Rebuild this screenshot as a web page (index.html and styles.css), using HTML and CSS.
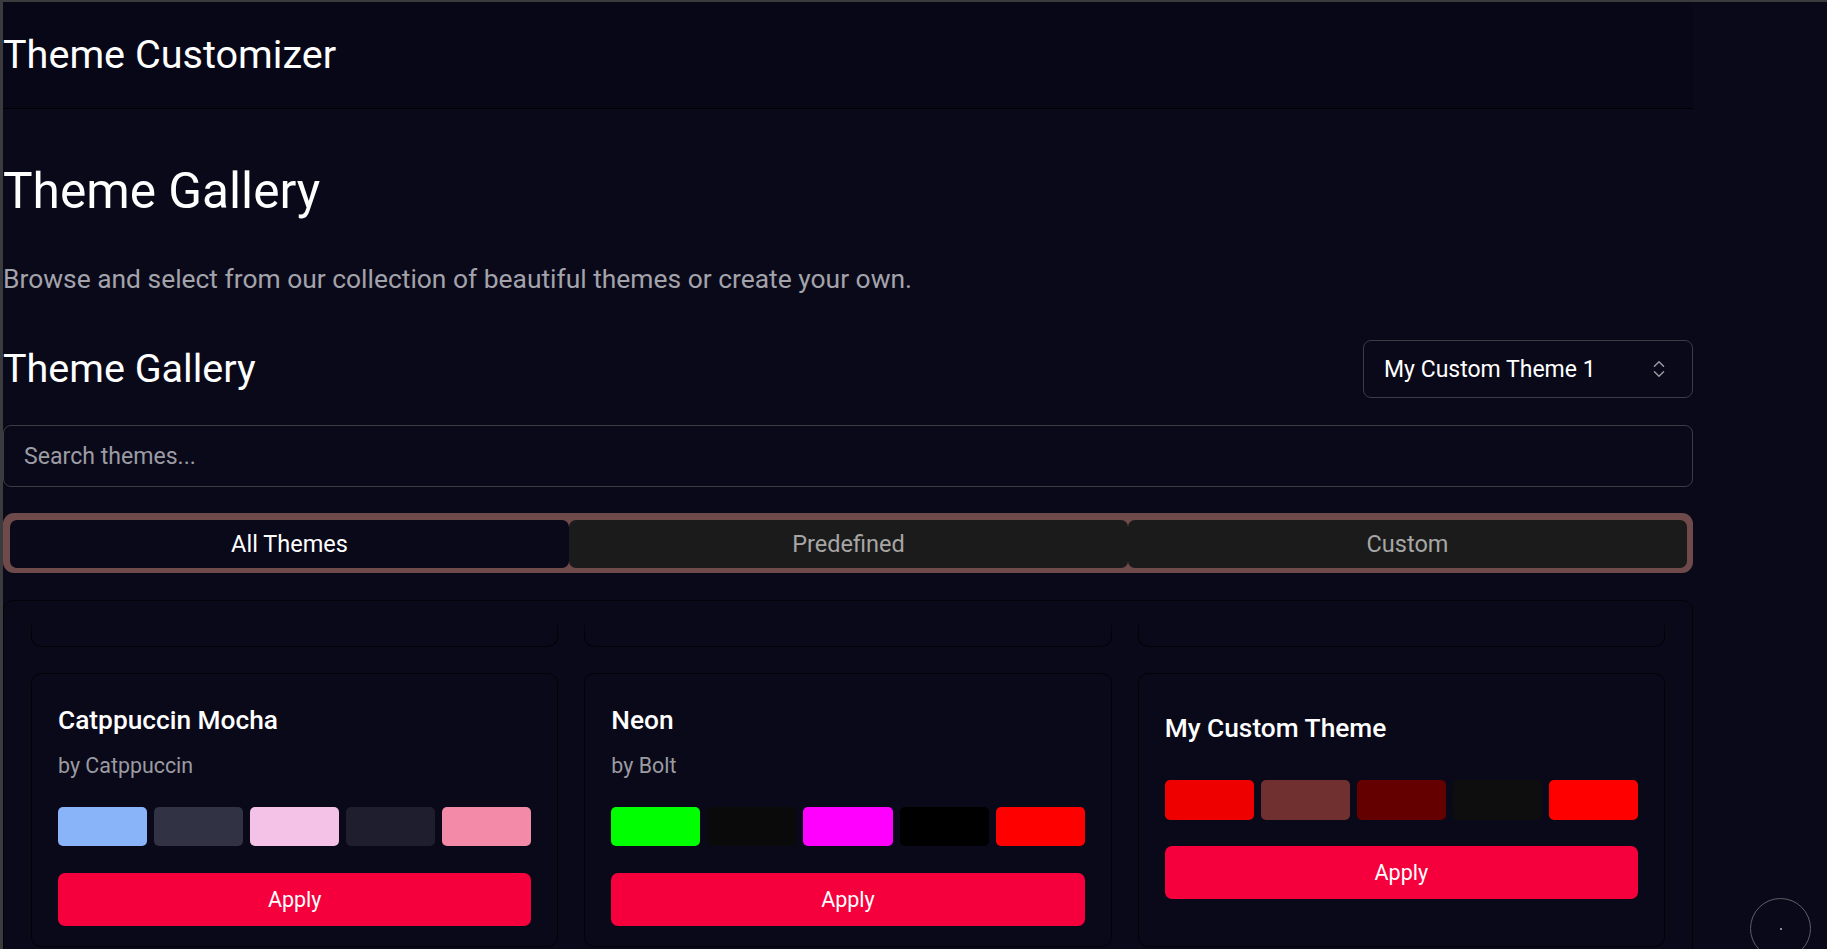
FILE: index.html
```html
<!DOCTYPE html>
<html lang="en">
<head>
<meta charset="utf-8">
<title>Theme Customizer</title>
<link rel="stylesheet" href="styles.css">
</head>
<body>
<div class="page">
  <header class="app-header">
    <h1 class="app-title">Theme Customizer</h1>
  </header>

  <main class="main">
    <h1 class="page-title">Theme Gallery</h1>
    <p class="page-sub">Browse and select from our collection of beautiful themes or create your own.</p>

    <div class="toolbar">
      <h2 class="section-title">Theme Gallery</h2>
      <button class="select">
        <span>My Custom Theme 1</span>
        <svg class="select-icon" viewBox="0 0 24 24" fill="none" stroke="currentColor" stroke-width="1.6" stroke-linecap="round" stroke-linejoin="round"><path d="m7 15 5 5 5-5"/><path d="m7 9 5-5 5 5"/></svg>
      </button>
    </div>

    <div class="search">Search themes...</div>

    <div class="tabs">
      <div class="tab active">All Themes</div>
      <div class="tab">Predefined</div>
      <div class="tab">Custom</div>
    </div>

    <section class="gallery">
      <div class="grid">
        <div class="card peek"></div>
        <div class="card peek"></div>
        <div class="card peek"></div>

        <div class="card">
          <div class="card-title">Catppuccin Mocha</div>
          <div class="card-author">by Catppuccin</div>
          <div class="swatches">
            <span class="swatch" style="background:#89b4fa"></span>
            <span class="swatch" style="background:#313244"></span>
            <span class="swatch" style="background:#f5c2e7"></span>
            <span class="swatch" style="background:#1e1e2e"></span>
            <span class="swatch" style="background:#f38ba8"></span>
          </div>
          <button class="apply">Apply</button>
        </div>

        <div class="card">
          <div class="card-title">Neon</div>
          <div class="card-author">by Bolt</div>
          <div class="swatches">
            <span class="swatch" style="background:#00ff00"></span>
            <span class="swatch" style="background:#0a0a0a"></span>
            <span class="swatch" style="background:#ff00ff"></span>
            <span class="swatch" style="background:#000000"></span>
            <span class="swatch" style="background:#ff0000"></span>
          </div>
          <button class="apply">Apply</button>
        </div>

        <div class="card custom">
          <div class="card-head">
            <div class="card-title">My Custom Theme</div>
          </div>
          <div class="swatches tall">
            <span class="swatch" style="background:#ee0000"></span>
            <span class="swatch" style="background:#703030"></span>
            <span class="swatch" style="background:#650000"></span>
            <span class="swatch" style="background:#0e0e0e"></span>
            <span class="swatch" style="background:#ff0000"></span>
          </div>
          <button class="apply">Apply</button>
        </div>
      </div>
    </section>
  </main>
</div>
<div class="fab"><span class="fab-dot"></span></div>
</body>
</html>
```

FILE: styles.css
```css
* { box-sizing: border-box; }

html, body {
  margin: 0;
  padding: 0;
}

body {
  background: #0a0919;
  color: #ffffff;
  font-family: Roboto, "Noto Sans", "Liberation Sans", sans-serif;
  border-top: 2px solid #3b3b3e;
  border-left: 3px solid #3b3b3e;
  height: 100vh;
  overflow: hidden;
}

.page {
  width: 1690px;
}

.app-header {
  height: 107px;
  background: #070718;
  border-bottom: 1px solid #000000;
  display: flex;
  align-items: center;
}

.app-title {
  margin: 0;
  font-size: 39.6px;
  line-height: 48px;
  font-weight: 400;
  color: #ffffff;
}

.main {
  display: flex;
  flex-direction: column;
}

.page-title {
  margin: 52px 0 0;
  font-size: 49.6px;
  line-height: 60px;
  font-weight: 400;
}

.page-sub {
  margin: 42px 0 0;
  font-size: 26.4px;
  line-height: 32px;
  color: #a3a3ab;
}

.toolbar {
  margin-top: 45px;
  display: flex;
  align-items: center;
  justify-content: space-between;
  height: 58px;
}

.section-title {
  margin: 0;
  font-size: 39.5px;
  line-height: 48px;
  font-weight: 400;
}

.select {
  width: 330px;
  height: 58px;
  background: transparent;
  border: 1px solid #3c3c44;
  border-radius: 8px;
  color: #ffffff;
  font-family: inherit;
  font-size: 23px;
  padding: 0 20px 0 20px;
  display: flex;
  align-items: center;
  justify-content: space-between;
}

.select-icon {
  width: 22px;
  height: 22px;
  color: #9a9aa2;
  margin-right: 2px;
}

.search {
  margin-top: 27px;
  height: 62px;
  border: 1px solid #3c3c44;
  border-radius: 8px;
  padding: 0 20px;
  display: flex;
  align-items: center;
  font-size: 23.1px;
  color: #9c9ca4;
}

.tabs {
  margin-top: 26px;
  height: 60px;
  background: #6f4a4a;
  border-radius: 11px;
  padding: 7px 6px 5px 7px;
  display: grid;
  grid-template-columns: 1fr 1fr 1fr;
}

.tab {
  background: #1b1b1b;
  border-radius: 7px;
  display: flex;
  align-items: center;
  justify-content: center;
  font-size: 23.5px;
  font-weight: 400;
  color: #a6a6a6;
}

.tab.active {
  background: #0a0919;
  color: #ffffff;
}

.gallery {
  margin-top: 27px;
  border: 1px solid #020207;
  border-radius: 10px;
  padding: 24px 27px 40px;
}

.grid {
  display: grid;
  grid-template-columns: repeat(3, 1fr);
  gap: 26px;
}

.card {
  border: 1px solid #020207;
  border-radius: 10px;
  padding: 30px 26px 20px;
  display: flex;
  flex-direction: column;
}

.card.peek {
  height: 22px;
  padding: 0;
  border-top: none;
  border-radius: 0 0 10px 10px;
}

.card-title {
  font-size: 26.3px;
  line-height: 32px;
  font-weight: 500;
  color: #ffffff;
}

.card-head {
  min-height: 48px;
  display: flex;
  align-items: center;
}

.card-author {
  margin-top: 16px;
  font-size: 21.4px;
  line-height: 28px;
  color: #9b9ba2;
}

.swatches {
  margin-top: 27px;
  display: grid;
  grid-template-columns: repeat(5, 1fr);
  gap: 7px;
  height: 39px;
}

.swatches.tall {
  margin-top: 28px;
  height: 40px;
}

.swatch {
  border-radius: 5px;
}

.apply {
  margin-top: 27px;
  height: 53px;
  border: none;
  border-radius: 7px;
  background: #f5003d;
  color: #ffffff;
  font-family: inherit;
  font-size: 21.5px;
  font-weight: 400;
}

.card.custom .apply {
  margin-top: 26px;
}

.fab {
  position: fixed;
  left: 1750px;
  top: 898px;
  width: 61px;
  height: 61px;
  border: 1px solid #5f5f66;
  border-radius: 50%;
  display: flex;
  align-items: center;
  justify-content: center;
}

.fab-dot {
  width: 2px;
  height: 2px;
  background: #8a8a90;
}
```
